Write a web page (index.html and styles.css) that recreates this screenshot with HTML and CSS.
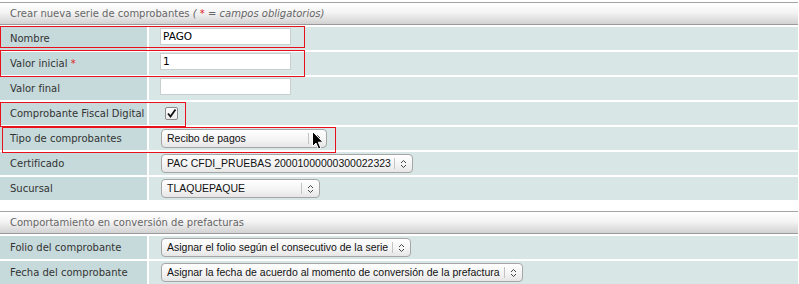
FILE: index.html
```html
<!DOCTYPE html>
<html lang="es">
<head>
<meta charset="utf-8">
<title>Crear nueva serie de comprobantes</title>
<link rel="stylesheet" href="styles.css">
</head>
<body>
<div class="page">
  <section class="group">
    <div class="group-head">Crear nueva serie de comprobantes <em>( <span class="req">*</span> = campos obligatorios)</em></div>
    <div class="row"><div class="label">Nombre</div><div class="value"><span class="input">PAGO</span></div></div>
    <div class="row"><div class="label">Valor inicial <span class="req">*</span></div><div class="value"><span class="input">1</span></div></div>
    <div class="row"><div class="label">Valor final</div><div class="value"><span class="input"></span></div></div>
    <div class="row"><div class="label">Comprobante Fiscal Digital</div><div class="value center"><span class="check"><svg width="11" height="11" viewBox="0 0 11 11"><path d="M2 5.5 L4.5 8.5 L9.5 1.5" fill="none" stroke="#111" stroke-width="1.8"/></svg></span></div></div>
    <div class="row"><div class="label">Tipo de comprobantes</div><div class="value center"><span class="select w-tipo"><span class="sel-text">Recibo de pagos</span><span class="sel-arrow"><svg width="7" height="10" viewBox="0 0 7 10"><path d="M1 4 L3.5 1.5 L6 4 M1 6 L3.5 8.5 L6 6" fill="none" stroke="#444" stroke-width="1"/></svg></span></span></div></div>
    <div class="row"><div class="label">Certificado</div><div class="value center"><span class="select w-cert"><span class="sel-text">PAC CFDI_PRUEBAS 20001000000300022323</span><span class="sel-arrow"><svg width="7" height="10" viewBox="0 0 7 10"><path d="M1 4 L3.5 1.5 L6 4 M1 6 L3.5 8.5 L6 6" fill="none" stroke="#444" stroke-width="1"/></svg></span></span></div></div>
    <div class="row"><div class="label">Sucursal</div><div class="value center"><span class="select w-suc"><span class="sel-text">TLAQUEPAQUE</span><span class="sel-arrow"><svg width="7" height="10" viewBox="0 0 7 10"><path d="M1 4 L3.5 1.5 L6 4 M1 6 L3.5 8.5 L6 6" fill="none" stroke="#444" stroke-width="1"/></svg></span></span></div></div>
  </section>
  <section class="group group-2">
    <div class="group-head">Comportamiento en conversión de prefacturas</div>
    <div class="row"><div class="label">Folio del comprobante</div><div class="value center"><span class="select w-folio"><span class="sel-text">Asignar el folio según el consecutivo de la serie</span><span class="sel-arrow"><svg width="7" height="10" viewBox="0 0 7 10"><path d="M1 4 L3.5 1.5 L6 4 M1 6 L3.5 8.5 L6 6" fill="none" stroke="#444" stroke-width="1"/></svg></span></span></div></div>
    <div class="row"><div class="label">Fecha del comprobante</div><div class="value center"><span class="select w-fecha"><span class="sel-text">Asignar la fecha de acuerdo al momento de conversión de la prefactura</span><span class="sel-arrow"><svg width="7" height="10" viewBox="0 0 7 10"><path d="M1 4 L3.5 1.5 L6 4 M1 6 L3.5 8.5 L6 6" fill="none" stroke="#444" stroke-width="1"/></svg></span></span></div></div>
  </section>

  <div class="mark mark-1"></div>
  <div class="mark mark-2"></div>
  <div class="mark mark-3"></div>
  <div class="mark mark-4"></div>
  <svg class="cursor" width="12" height="20" viewBox="0 0 12 20"><path d="M0.5 0.5 L0.5 15.5 L4 12 L6.5 18 L8.8 17 L6.3 11.2 L11 11.2 Z" fill="#000" stroke="#fff" stroke-width="1"/></svg>
</div>
</body>
</html>
```

FILE: styles.css
```css
html, body {
  margin: 0;
  padding: 0;
  background: #fff;
}
.page {
  position: relative;
  width: 798px;
  padding-top: 2px;
  font-family: "DejaVu Sans", sans-serif;
  font-size: 10px;
  color: #333;
}
.group-2 {
  margin-top: 11px;
}
.group-head {
  height: 21px;
  line-height: 21px;
  padding-left: 10px;
  border-top: 1px solid #a3a3a3;
  border-bottom: 1px solid #9a9a9a;
  background: linear-gradient(#ffffff, #f4f4f4 45%, #d2d2d2);
  color: #666;
}
.group-head em {
  font-style: italic;
}
.req {
  color: #e02020;
  font-style: normal;
}
.group-head em .req {
  font-style: italic;
}
.row {
  display: grid;
  grid-template-columns: 147px 1fr;
  column-gap: 2px;
  height: 23px;
  margin-top: 2px;
}
.label {
  background: #c6dadb;
  padding-left: 10px;
  line-height: 23px;
  white-space: nowrap;
}
.value {
  background: #d8e6e6;
  padding-left: 11px;
  display: flex;
  align-items: flex-start;
}
.value.center {
  align-items: center;
}
.input {
  box-sizing: border-box;
  width: 131px;
  height: 17px;
  margin-top: 1px;
  background: #fff;
  border: 1px solid #c9cfcf;
  padding-left: 2px;
  line-height: 15px;
  font-size: 10.5px;
  color: #000;
}
.check {
  box-sizing: border-box;
  width: 13px;
  height: 13px;
  margin-left: 5px;
  border: 1px solid #8a8a8a;
  border-radius: 2px;
  background: linear-gradient(#ffffff, #ececec);
  display: flex;
  align-items: center;
  justify-content: center;
}
.select {
  box-sizing: border-box;
  height: 19px;
  margin-left: 1px;
  display: flex;
  align-items: stretch;
  border: 1px solid #a6a6a6;
  border-radius: 4px;
  background: linear-gradient(#ffffff, #f3f3f3 60%, #e6e6e6);
  font-family: "Liberation Sans", Arial, sans-serif;
  font-size: 10.5px;
  color: #111;
}
.sel-text {
  flex: 1;
  padding-left: 5px;
  line-height: 17px;
  white-space: nowrap;
  overflow: hidden;
}
.sel-arrow {
  width: 17px;
  margin: 3px 0;
  border-left: 1px solid #c4c4c4;
  display: flex;
  align-items: center;
  justify-content: center;
}
.w-tipo { width: 166px; }
.w-cert { width: 252px; }
.w-suc { width: 159px; }
.w-folio { width: 250px; }
.w-fecha { width: 362px; }

.mark {
  position: absolute;
  box-sizing: border-box;
  border: 1.5px solid #e8101a;
}
.mark-1 { left: 0; top: 26px; width: 305px; height: 22px; }
.mark-2 { left: 0; top: 50px; width: 305px; height: 27px; }
.mark-3 { left: 0; top: 102px; width: 186px; height: 25px; }
.mark-4 { left: 2px; top: 127px; width: 334px; height: 26px; }
.cursor {
  position: absolute;
  left: 312px;
  top: 131px;
}
```
